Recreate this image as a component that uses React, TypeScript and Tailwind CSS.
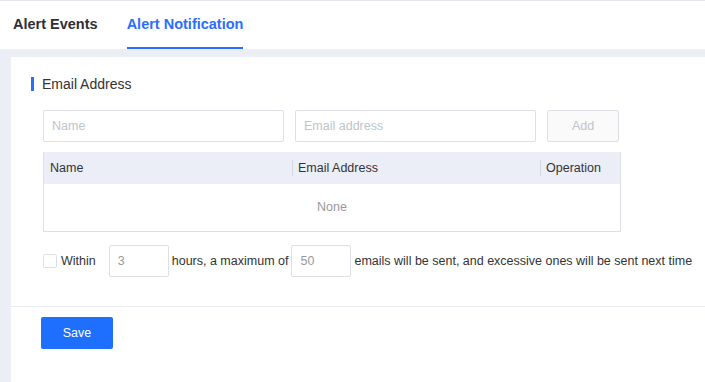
import React, { useState } from "react";

// Tabs at the top of the page
const TABS = ["Alert Events", "Alert Notification"];

export default function App() {
  const [active, setActive] = useState(1);
  const [limitOn, setLimitOn] = useState(false);

  return (
    <div className="min-h-screen bg-[#ebeef5] font-['Liberation_Sans',Arial,sans-serif] text-[#333]">
      {/* Tabs */}
      <div className="flex h-[49px] gap-[29px] border-t border-[#e4e7ed] bg-white pl-[13px]">
        {TABS.map((t, i) => (
          <button
            key={t}
            onClick={() => setActive(i)}
            className={
              i === active
                ? "flex h-full items-center border-b-2 border-[#2b6eff] pt-[2px] text-[14.5px] font-bold text-[#2b6eff]"
                : "flex h-full items-center border-b-2 border-transparent pt-[2px] text-[14.5px] font-bold text-[#2d3038]"
            }
          >
            {t}
          </button>
        ))}
      </div>

      {/* Content card */}
      <div className="pl-[11px] pt-[8px]">
        <div className="min-h-[325px] bg-white">
          <div className="pl-[20px] pt-[20px]">
            {/* Section title */}
            <div className="flex h-[14px] items-center">
              <div className="h-[14px] w-[3px] bg-[#2b6eff]" />
              <span className="ml-[8px] text-[14px] leading-[14px] text-[#333]">Email Address</span>
            </div>

            <div className="ml-[12px] mt-[19px]">
              {/* Inputs */}
              <div className="flex gap-[11px]">
                <input
                  placeholder="Name"
                  className="h-[32px] w-[241px] rounded-[2px] border border-[#dcdfe6] px-[8px] text-[12.5px] outline-none placeholder:text-[#c0c4cc]"
                />
                <input
                  placeholder="Email address"
                  className="h-[32px] w-[241px] rounded-[2px] border border-[#dcdfe6] px-[8px] text-[12.5px] outline-none placeholder:text-[#c0c4cc]"
                />
                <button className="h-[32px] w-[72px] rounded-[2px] border border-[#dcdfe6] bg-[#fafafa] text-[12.5px] text-[#c0c4cc]">
                  Add
                </button>
              </div>

              {/* Table */}
              <div className="mt-[10px] w-[578px] border-x border-b border-[#dcdfe6] text-[12.5px]">
                <div className="flex h-[32px] items-center bg-[#ebeef7] text-[#333]">
                  <div className="w-[248px] pl-[6px]">Name</div>
                  <div className="h-[16px] w-px bg-[#d4d7de]" />
                  <div className="w-[247px] pl-[5px]">Email Address</div>
                  <div className="h-[16px] w-px bg-[#d4d7de]" />
                  <div className="flex-1 pl-[5px]">Operation</div>
                </div>
                <div className="flex h-[47px] items-center justify-center pb-[1px] text-[#999]">None</div>
              </div>

              {/* Sending limit */}
              <div className="mt-[13px] flex items-center text-[12.5px] text-[#333]">
                <label className="flex cursor-pointer items-center">
                  <span
                    onClick={() => setLimitOn(!limitOn)}
                    className={
                      limitOn
                        ? "h-[14px] w-[14px] rounded-[2px] border border-[#2b6eff] bg-[#2b6eff]"
                        : "h-[14px] w-[14px] rounded-[2px] border border-[#dcdfe6] bg-white"
                    }
                  />
                  <span className="ml-[4px]">Within</span>
                </label>
                <input
                  defaultValue="3"
                  className="ml-[13px] h-[32px] w-[60px] rounded-[2px] border border-[#dcdfe6] px-[8px] text-[12.5px] text-[#999] outline-none"
                />
                <span className="mx-[3px]">hours, a maximum of</span>
                <input
                  defaultValue="50"
                  className="h-[32px] w-[60px] rounded-[2px] border border-[#dcdfe6] px-[8px] text-[12.5px] text-[#999] outline-none"
                />
                <span className="ml-[3px]">emails will be sent, and excessive ones will be sent next time</span>
              </div>
            </div>
          </div>

          {/* Footer */}
          <div className="mt-[29px] border-t border-[#e8eaef] pl-[30px] pt-[10px]">
            <button className="h-[32px] w-[72px] rounded-[2px] bg-[#1f6fff] text-[12.5px] text-white">Save</button>
          </div>
        </div>
      </div>
    </div>
  );
}
